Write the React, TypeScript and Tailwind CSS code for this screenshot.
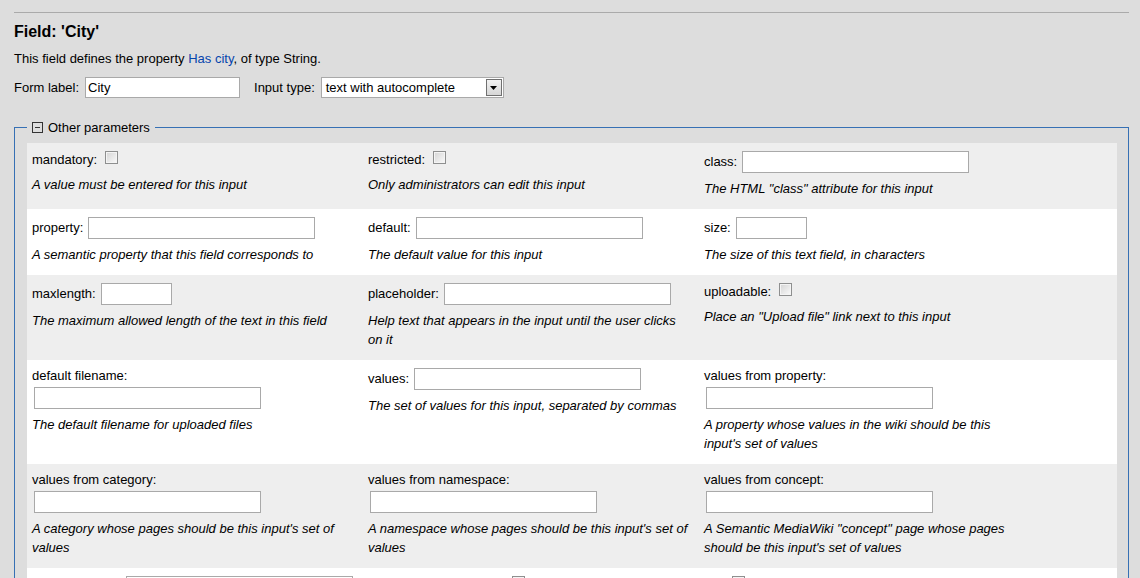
type Cell =
  | { kind: 'check'; label: string; desc: string }
  | { kind: 'inline'; label: string; width: number; desc: string }
  | { kind: 'block'; label: string; desc: string };

const rows: Cell[][] = [
  [
    { kind: 'check', label: 'mandatory:', desc: 'A value must be entered for this input' },
    { kind: 'check', label: 'restricted:', desc: 'Only administrators can edit this input' },
    { kind: 'inline', label: 'class:', width: 227, desc: 'The HTML "class" attribute for this input' },
  ],
  [
    { kind: 'inline', label: 'property:', width: 227, desc: 'A semantic property that this field corresponds to' },
    { kind: 'inline', label: 'default:', width: 227, desc: 'The default value for this input' },
    { kind: 'inline', label: 'size:', width: 71, desc: 'The size of this text field, in characters' },
  ],
  [
    { kind: 'inline', label: 'maxlength:', width: 71, desc: 'The maximum allowed length of the text in this field' },
    { kind: 'inline', label: 'placeholder:', width: 227, desc: 'Help text that appears in the input until the user clicks on it' },
    { kind: 'check', label: 'uploadable:', desc: 'Place an "Upload file" link next to this input' },
  ],
  [
    { kind: 'block', label: 'default filename:', desc: 'The default filename for uploaded files' },
    { kind: 'inline', label: 'values:', width: 227, desc: 'The set of values for this input, separated by commas' },
    { kind: 'block', label: 'values from property:', desc: "A property whose values in the wiki should be this input's set of values" },
  ],
  [
    { kind: 'block', label: 'values from category:', desc: "A category whose pages should be this input's set of values" },
    { kind: 'block', label: 'values from namespace:', desc: "A namespace whose pages should be this input's set of values" },
    { kind: 'block', label: 'values from concept:', desc: 'A Semantic MediaWiki "concept" page whose pages should be this input\'s set of values' },
  ],
  [
    { kind: 'inline', label: 'values from url:', width: 227, desc: 'A URL from which to get the set of values for this input' },
    { kind: 'check', label: 'remote autocompletion:', desc: 'Autocomplete values by querying the wiki' },
    { kind: 'check', label: 'list:', desc: 'Treat this field as a list of values' },
  ],
];

function Checkbox() {
  return (
    <span className="mt-px inline-block h-[13px] w-[13px] shrink-0 self-start border border-[#8e8f8f] bg-gradient-to-br from-[#d4d4d4] to-[#fafafa] shadow-[inset_0_0_0_1px_#f4f4f4]" />
  );
}

function TextBox({ width }: { width: number }) {
  return <span className="block h-[22px] shrink-0 border border-[#a9a9a9] bg-white" style={{ width }} />;
}

function ParamCell({ cell }: { cell: Cell }) {
  if (cell.kind === 'block') {
    return (
      <div className="pb-[11px] pl-[5px] pr-[7px] pt-[6px]">
        <div className="h-[19px] leading-[19px]">{cell.label}</div>
        <div className="ml-[2px] mt-[2px]">
          <TextBox width={227} />
        </div>
        <p className="mt-[6px] italic leading-[19px]">{cell.desc}</p>
      </div>
    );
  }
  if (cell.kind === 'check') {
    return (
      <div className="pb-[11px] pl-[5px] pr-[7px] pt-[7px]">
        <div className="flex h-[19px] items-center gap-[8px]">
          <span>{cell.label}</span>
          <Checkbox />
        </div>
        <p className="mt-[6px] italic leading-[19px]">{cell.desc}</p>
      </div>
    );
  }
  return (
    <div className="pb-[11px] pl-[5px] pr-[7px] pt-[8px]">
      <div className="flex h-[22px] items-center gap-[5px]">
        <span className="whitespace-nowrap">{cell.label}</span>
        <TextBox width={cell.width} />
      </div>
      <p className="mt-[6px] italic leading-[19px]">{cell.desc}</p>
    </div>
  );
}

export default function App() {
  return (
    <div className="min-h-screen bg-[#dddddd] font-['Liberation_Sans',Arial,sans-serif] text-[13px] text-black">
      <div className="pl-[14px] pr-[11px] pt-[12px]">
        <div className="border-t border-[#aaaaaa]" />

        <h2 className="mt-[9px] text-[16px] font-bold leading-[20px]">Field: 'City'</h2>
        <p className="mt-[7px] leading-[19px]">
          This field defines the property <a className="text-[#0645ad]">Has city</a>, of type String.
        </p>

        <div className="mt-[9px] flex h-[21px] items-center">
          <span>Form label:</span>
          <span className="ml-[6px] flex h-[21px] w-[155px] items-center border border-[#a9a9a9] bg-white pl-[2px]">City</span>
          <span className="ml-[14px]">Input type:</span>
          <span className="ml-[6px] flex h-[21px] w-[183px] items-center justify-between border border-[#a9a9a9] bg-white pl-[4px] pr-px">
            <span>text with autocomplete</span>
            <span className="flex h-[17px] w-[16px] items-center justify-center border border-[#707070] bg-gradient-to-b from-[#f2f2f2] to-[#d6d6d6]">
              <svg width="7" height="4" viewBox="0 0 7 4">
                <path d="M0 0h7L3.5 4z" fill="#000" />
              </svg>
            </span>
          </span>
        </div>

        <fieldset className="mt-[20px] border border-[#3670b4] pb-[10px] pl-[12px] pr-[11px] pt-[6px]">
          <legend className="px-[5px]">
            <span className="flex h-[19px] items-center gap-[5px]">
              <span className="relative flex h-[11px] w-[11px] items-center justify-center border border-[#333333]">
                <span className="block h-px w-[5px] bg-[#333333]" />
              </span>
              <span>Other parameters</span>
            </span>
          </legend>

          <div>
            {rows.map((row, i) => (
              <div
                key={i}
                className={i % 2 === 0 ? 'grid grid-cols-[336px_336px_336px] bg-[#eeeeee]' : 'grid grid-cols-[336px_336px_336px] bg-white'}
              >
                {row.map((cell, j) => (
                  <ParamCell key={j} cell={cell} />
                ))}
              </div>
            ))}
          </div>
        </fieldset>
      </div>
    </div>
  );
}
